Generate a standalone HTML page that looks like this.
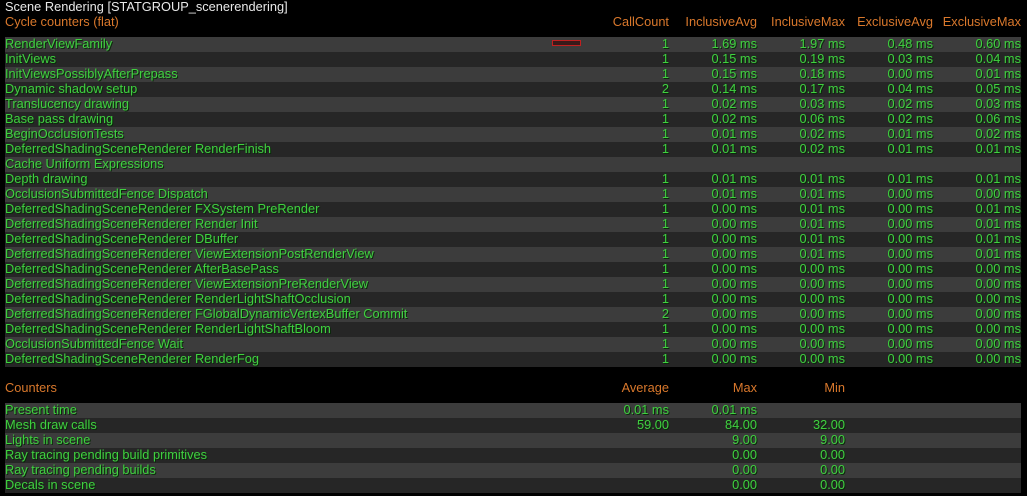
<!DOCTYPE html>
<html><head><style>
body{margin:0;background:#000;width:1027px;height:496px;overflow:hidden;font-family:"Liberation Sans",sans-serif;font-size:12.8px;position:relative}
.t{position:absolute;left:5px;color:#e8e8e8;top:0;line-height:14px}
.o{color:#d9782c}
.h{position:absolute;line-height:14px;white-space:nowrap}
.r{position:absolute;left:5px;width:1016px;height:15px;line-height:14px;color:#40d040;text-shadow:1px 1px 0 #0a2a0a;white-space:nowrap}
.a{background:#3c3c3c}.b{background:#262626}
.r span{position:absolute;text-align:right;width:88px}
.c1{right:352px}.c2{right:264px}.c3{right:176px}.c4{right:88px}.c5{right:0}
.hd span{position:absolute;text-align:right;width:100px}
</style></head><body>
<div class="t">Scene Rendering [STATGROUP_scenerendering]</div>
<div class="h o" style="left:5px;top:15px">Cycle counters (flat)</div>
<div class="h o hd" style="left:5px;width:1016px;top:15px">
<span style="right:352px">CallCount</span><span style="right:264px">InclusiveAvg</span><span style="right:176px">InclusiveMax</span><span style="right:88px">ExclusiveAvg</span><span style="right:0">ExclusiveMax</span></div>
<div id="cy"></div>
<div style="position:absolute;left:552px;top:40px;width:27px;height:4px;border:1px solid #c02020;background:#3a1a1a"></div>
<div class="h o" style="left:5px;top:381px">Counters</div>
<div class="h o hd" style="left:5px;width:1016px;top:381px">
<span style="right:352px">Average</span><span style="right:264px">Max</span><span style="right:176px">Min</span></div>
<div class="r a" style="top:403px">Present time<span class="c1">0.01 ms</span><span class="c2">0.01 ms</span></div>
<div class="r b" style="top:418px">Mesh draw calls<span class="c1">59.00</span><span class="c2">84.00</span><span class="c3">32.00</span></div>
<div class="r a" style="top:433px">Lights in scene<span class="c2">9.00</span><span class="c3">9.00</span></div>
<div class="r b" style="top:448px">Ray tracing pending build primitives<span class="c2">0.00</span><span class="c3">0.00</span></div>
<div class="r a" style="top:463px">Ray tracing pending builds<span class="c2">0.00</span><span class="c3">0.00</span></div>
<div class="r b" style="top:478px">Decals in scene<span class="c2">0.00</span><span class="c3">0.00</span></div>
<script>
var d=[["RenderViewFamily",1,"1.69","1.97","0.48","0.60"],["InitViews",1,"0.15","0.19","0.03","0.04"],["InitViewsPossiblyAfterPrepass",1,"0.15","0.18","0.00","0.01"],["Dynamic shadow setup",2,"0.14","0.17","0.04","0.05"],["Translucency drawing",1,"0.02","0.03","0.02","0.03"],["Base pass drawing",1,"0.02","0.06","0.02","0.06"],["BeginOcclusionTests",1,"0.01","0.02","0.01","0.02"],["DeferredShadingSceneRenderer RenderFinish",1,"0.01","0.02","0.01","0.01"],["Cache Uniform Expressions"],["Depth drawing",1,"0.01","0.01","0.01","0.01"],["OcclusionSubmittedFence Dispatch",1,"0.01","0.01","0.00","0.00"],["DeferredShadingSceneRenderer FXSystem PreRender",1,"0.00","0.01","0.00","0.01"],["DeferredShadingSceneRenderer Render Init",1,"0.00","0.01","0.00","0.01"],["DeferredShadingSceneRenderer DBuffer",1,"0.00","0.01","0.00","0.01"],["DeferredShadingSceneRenderer ViewExtensionPostRenderView",1,"0.00","0.01","0.00","0.01"],["DeferredShadingSceneRenderer AfterBasePass",1,"0.00","0.00","0.00","0.00"],["DeferredShadingSceneRenderer ViewExtensionPreRenderView",1,"0.00","0.00","0.00","0.00"],["DeferredShadingSceneRenderer RenderLightShaftOcclusion",1,"0.00","0.00","0.00","0.00"],["DeferredShadingSceneRenderer FGlobalDynamicVertexBuffer Commit",2,"0.00","0.00","0.00","0.00"],["DeferredShadingSceneRenderer RenderLightShaftBloom",1,"0.00","0.00","0.00","0.00"],["OcclusionSubmittedFence Wait",1,"0.00","0.00","0.00","0.00"],["DeferredShadingSceneRenderer RenderFog",1,"0.00","0.00","0.00","0.00"]];
var h="";d.forEach(function(r,i){h+='<div class="r '+(i%2?'b':'a')+'" style="top:'+(37+15*i)+'px">'+r[0];if(r.length>1){h+='<span class="c1">'+r[1]+'</span>';for(var k=2;k<6;k++)h+='<span class="c'+k+'">'+r[k]+' ms</span>';}h+='</div>';});
document.getElementById("cy").innerHTML=h;
</script>
</body></html>
